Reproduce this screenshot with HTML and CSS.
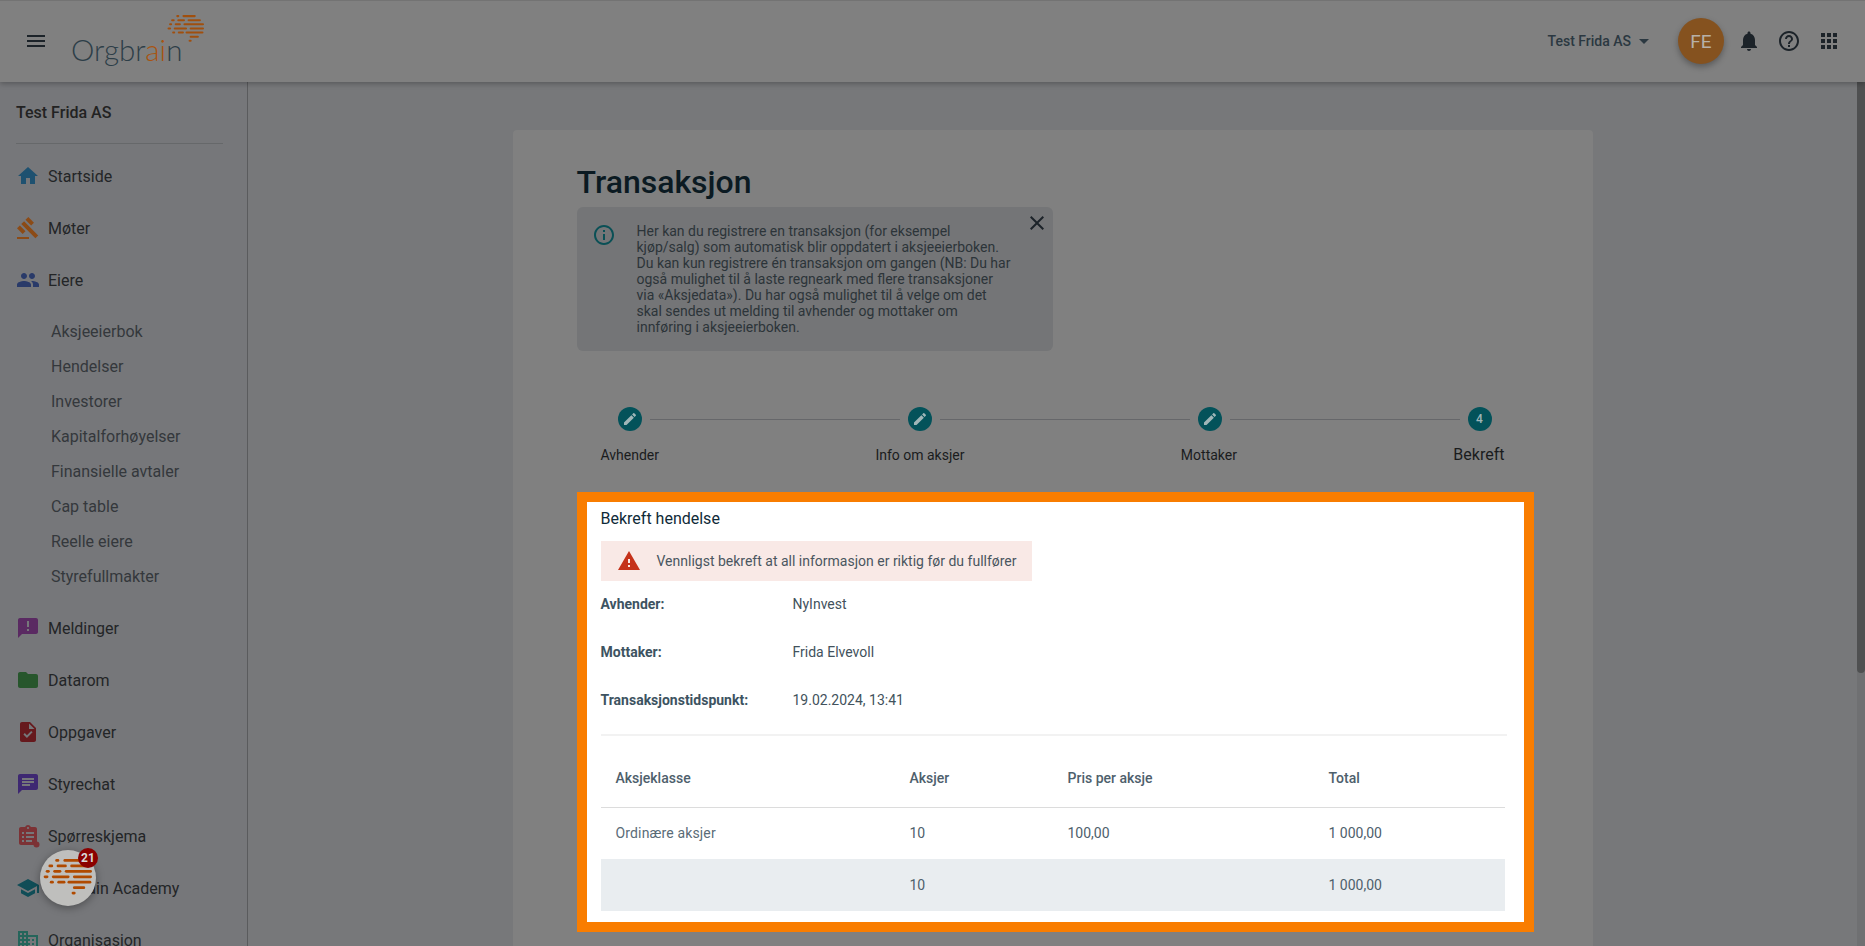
FILE: index.html
```html
<!DOCTYPE html>
<html lang="en">

<head>
    <meta charset="UTF-8">
    <meta name="viewport" content="width=device-width, initial-scale=1.0">
    <title>Orgbrain - Transaksjon</title>
    <link rel="stylesheet" href="styles.css">
</head>

<body>
    <svg class="defs" width="0" height="0">
        <symbol id="brain" viewBox="0 0 36 30">
            <rect x="9" y="0" width="3" height="2" rx="1" />
            <rect x="15" y="0" width="13" height="2" rx="1" />
            <rect x="4" y="4" width="3.500" height="2" rx="1" />
            <rect x="10" y="4" width="7.500" height="2" rx="1" />
            <rect x="20" y="4" width="13" height="2" rx="1" />
            <rect x="2" y="8" width="3" height="2" rx="1" />
            <rect x="7.500" y="8" width="6" height="2" rx="1" />
            <rect x="16" y="8" width="20" height="2" rx="1" />
            <rect x="0.500" y="12" width="3.500" height="2" rx="1" />
            <rect x="6.500" y="12" width="13" height="2" rx="1" />
            <rect x="22" y="12" width="14" height="2" rx="1" />
            <rect x="5" y="16" width="3" height="2" rx="1" />
            <rect x="10.500" y="16" width="6" height="2" rx="1" />
            <rect x="18" y="16" width="17.500" height="2" rx="1" />
            <rect x="22" y="20" width="9" height="2" rx="1" />
            <rect x="21" y="24" width="3" height="2" rx="1" />
        </symbol>
    </svg>

    <header class="topbar">
        <svg class="icon menu-icon" viewBox="0 0 24 24"><path d="M3 18h18v-2H3v2zm0-5h18v-2H3v2zm0-7v2h18V6H3z" /></svg>
        <div class="logo">
            <span class="logo-text">Orgbr<span class="logo-accent">ai</span>n</span>
            <svg class="logo-brain"><use href="#brain" /></svg>
        </div>
        <div class="topbar-right">
            <span class="org-name">Test Frida AS</span>
            <span class="caret"></span>
            <span class="avatar">FE</span>
            <svg class="icon bar-icon" viewBox="0 0 24 24"><path d="M12 22c1.100 0 2-.9 2-2h-4c0 1.100.89 2 2 2zm6-6v-5c0-3.070-1.640-5.640-4.500-6.320V4c0-.83-.67-1.500-1.500-1.500s-1.500.67-1.500 1.500v.68C7.630 5.360 6 7.920 6 11v5l-2 2v1h16v-1l-2-2z" /></svg>
            <svg class="icon bar-icon" viewBox="0 0 24 24"><path d="M11 18h2v-2h-2v2zm1-16C6.480 2 2 6.480 2 12s4.480 10 10 10 10-4.480 10-10S17.520 2 12 2zm0 18c-4.410 0-8-3.590-8-8s3.590-8 8-8 8 3.590 8 8-3.590 8-8 8zm0-14c-2.210 0-4 1.790-4 4h2c0-1.100.9-2 2-2s2 .9 2 2c0 2-3 1.750-3 5h2c0-2.250 3-2.500 3-5 0-2.210-1.790-4-4-4z" /></svg>
            <svg class="icon bar-icon" viewBox="0 0 24 24"><path d="M4 8h4V4H4v4zm6 12h4v-4h-4v4zm-6 0h4v-4H4v4zm0-6h4v-4H4v4zm6 0h4v-4h-4v4zm6-10v4h4V4h-4zm-6 4h4V4h-4v4zm6 6h4v-4h-4v4zm0 6h4v-4h-4v4z" /></svg>
        </div>
    </header>

    <div class="layout">
        <aside class="sidebar">
            <div class="sidebar-title">Test Frida AS</div>
            <nav>
                <a class="nav-item">
                    <svg class="icon home" viewBox="0 0 24 24"><path d="M10 20v-6h4v6h5v-8h3L12 3 2 12h3v8z" /></svg>
                    Startside
                </a>
                <a class="nav-item">
                    <svg class="icon gavel" viewBox="0 0 24 24"><path d="M1 21h12v2H1zM5.245 8.070l2.830-2.827 14.140 14.142-2.828 2.828zM12.317 1l5.657 5.656-2.830 2.830-5.654-5.660zM3.825 9.485l5.657 5.657-2.828 2.828-5.657-5.657z" /></svg>
                    Møter
                </a>
                <a class="nav-item">
                    <svg class="icon people" viewBox="0 0 24 24"><path d="M16 11c1.660 0 2.990-1.340 2.990-3S17.660 5 16 5c-1.660 0-3 1.340-3 3s1.340 3 3 3zm-8 0c1.660 0 2.990-1.340 2.990-3S9.660 5 8 5C6.340 5 5 6.340 5 8s1.340 3 3 3zm0 2c-2.330 0-7 1.170-7 3.500V19h14v-2.500c0-2.330-4.670-3.500-7-3.500zm8 0c-.29 0-.62.02-.97.05 1.160.84 1.970 1.970 1.970 3.450V19h6v-2.500c0-2.330-4.670-3.500-7-3.500z" /></svg>
                    Eiere
                </a>
                <div class="subnav">
                    <a>Aksjeeierbok</a>
                    <a>Hendelser</a>
                    <a>Investorer</a>
                    <a>Kapitalforhøyelser</a>
                    <a>Finansielle avtaler</a>
                    <a>Cap table</a>
                    <a>Reelle eiere</a>
                    <a>Styrefullmakter</a>
                </div>
                <a class="nav-item">
                    <svg class="icon messages" viewBox="0 0 24 24"><path d="M20 2H4c-1.100 0-1.990.9-1.990 2L2 22l4-4h14c1.100 0 2-.9 2-2V4c0-1.100-.9-2-2-2zm-7 9h-2V5h2v6zm0 4h-2v-2h2v2z" /></svg>
                    Meldinger
                </a>
                <a class="nav-item">
                    <svg class="icon folder" viewBox="0 0 24 24"><path d="M10 4H4c-1.100 0-1.990.9-1.990 2L2 18c0 1.100.9 2 2 2h16c1.100 0 2-.9 2-2V8c0-1.100-.9-2-2-2h-8l-2-2z" /></svg>
                    Datarom
                </a>
                <a class="nav-item">
                    <svg class="icon tasks" viewBox="0 0 24 24"><path d="M14 2H6c-1.100 0-1.990.9-1.990 2L4 20c0 1.100.89 2 1.990 2H18c1.100 0 2-.9 2-2V8l-6-6zm-3.060 16L7.400 14.460l1.410-1.410 2.120 2.120 4.240-4.240 1.410 1.410L10.940 18zM13 9V3.500L18.500 9H13z" /></svg>
                    Oppgaver
                </a>
                <a class="nav-item">
                    <svg class="icon chat" viewBox="0 0 24 24"><path d="M20 2H4c-1.100 0-1.990.9-1.990 2L2 22l4-4h14c1.100 0 2-.9 2-2V4c0-1.100-.9-2-2-2zM6 9h12v2H6V9zm8 5H6v-2h8v2zm4-6H6V6h12v2z" /></svg>
                    Styrechat
                </a>
                <a class="nav-item">
                    <svg class="icon survey" viewBox="0 0 24 24">
                        <path d="M19 3h-4.180C14.400 1.840 13.300 1 12 1c-1.300 0-2.400.84-2.820 2H5c-1.100 0-2 .9-2 2v14c0 1.100.9 2 2 2h14c1.100 0 2-.9 2-2V5c0-1.100-.9-2-2-2zm-7 0c.55 0 1 .45 1 1s-.45 1-1 1-1-.45-1-1 .45-1 1-1zM6 8h2v2H6V8zm0 4h2v2H6v-2zm0 4h2v2H6v-2zm4-8h8v2h-8V8zm0 4h8v2h-8v-2zm0 4h6v2h-6v-2z" fill-rule="evenodd" />
                        <circle cx="20.500" cy="20.500" r="3" />
                    </svg>
                    Spørreskjema
                </a>
                <a class="nav-item">
                    <svg class="icon academy" viewBox="0 0 24 24"><path d="M5 13.180v4L12 21l7-3.820v-4L12 17l-7-3.820zM12 3L1 9l11 6 9-4.910V17h2V9L12 3z" /></svg>
                    Orgbrain Academy
                </a>
                <a class="nav-item">
                    <svg class="icon org" viewBox="0 0 24 24"><path d="M12 7V3H2v18h20V7H12zM6 19H4v-2h2v2zm0-4H4v-2h2v2zm0-4H4V9h2v2zm0-4H4V5h2v2zm4 12H8v-2h2v2zm0-4H8v-2h2v2zm0-4H8V9h2v2zm0-4H8V5h2v2zm10 12h-8v-2h2v-2h-2v-2h2v-2h-2V9h8v10zm-2-8h-2v2h2v-2zm0 4h-2v2h2v-2z" /></svg>
                    Organisasjon
                </a>
            </nav>
        </aside>

        <main class="content">
            <section class="card">
                <h1>Transaksjon</h1>
                <div class="info-box">
                    <svg class="icon info-icon" viewBox="0 0 24 24"><path d="M11 7h2v2h-2zm0 4h2v6h-2zm1-9C6.480 2 2 6.480 2 12s4.480 10 10 10 10-4.480 10-10S17.520 2 12 2zm0 18c-4.410 0-8-3.590-8-8s3.590-8 8-8 8 3.590 8 8-3.590 8-8 8z" /></svg>
                    <p>Her kan du registrere en transaksjon (for eksempel kjøp/salg) som automatisk blir oppdatert i aksjeeierboken. Du kan kun registrere én transaksjon om gangen (NB: Du har også mulighet til å laste regneark med flere transaksjoner via «Aksjedata»). Du har også mulighet til å velge om det skal sendes ut melding til avhender og mottaker om innføring i aksjeeierboken.</p>
                    <svg class="icon close-icon" viewBox="0 0 24 24"><path d="M19 6.410L17.590 5 12 10.590 6.410 5 5 6.410 10.590 12 5 17.590 6.410 19 12 13.410 17.590 19 19 17.590 13.410 12z" /></svg>
                </div>

                <div class="stepper">
                    <div class="step-track">
                        <span class="step-dot"><svg viewBox="0 0 24 24"><path d="M3 17.250V21h3.750L17.810 9.940l-3.750-3.750L3 17.250zM20.710 7.040c.39-.39.39-1.020 0-1.410l-2.340-2.340c-.39-.39-1.020-.39-1.410 0l-1.830 1.830 3.750 3.750 1.830-1.830z" /></svg></span>
                        <span class="step-line"></span>
                        <span class="step-dot"><svg viewBox="0 0 24 24"><path d="M3 17.250V21h3.750L17.810 9.940l-3.750-3.750L3 17.250zM20.710 7.040c.39-.39.39-1.020 0-1.410l-2.340-2.340c-.39-.39-1.020-.39-1.410 0l-1.830 1.830 3.750 3.750 1.830-1.830z" /></svg></span>
                        <span class="step-line"></span>
                        <span class="step-dot"><svg viewBox="0 0 24 24"><path d="M3 17.250V21h3.750L17.810 9.940l-3.750-3.750L3 17.250zM20.710 7.040c.39-.39.39-1.020 0-1.410l-2.340-2.340c-.39-.39-1.020-.39-1.410 0l-1.830 1.830 3.750 3.750 1.830-1.830z" /></svg></span>
                        <span class="step-line step-line-last"></span>
                        <span class="step-dot">4</span>
                    </div>
                    <div class="step-labels">
                        <span>Avhender</span>
                        <span>Info om aksjer</span>
                        <span>Mottaker</span>
                        <span class="step-current">Bekreft</span>
                    </div>
                </div>

                <div class="confirm-box">
                    <h2>Bekreft hendelse</h2>
                    <div class="warning">
                        <svg class="icon warning-icon" viewBox="0 0 24 24"><path d="M1 21h22L12 2 1 21zm12-3h-2v-2h2v2zm0-4h-2v-4h2v4z" /></svg>
                        Vennligst bekreft at all informasjon er riktig før du fullfører
                    </div>
                    <dl class="summary">
                        <div><dt>Avhender:</dt><dd>NyInvest</dd></div>
                        <div><dt>Mottaker:</dt><dd>Frida Elvevoll</dd></div>
                        <div><dt>Transaksjonstidspunkt:</dt><dd>19.02.2024, 13:41</dd></div>
                    </dl>
                    <hr class="divider">
                    <table>
                        <thead>
                            <tr>
                                <th class="col-class">Aksjeklasse</th>
                                <th class="col-shares">Aksjer</th>
                                <th class="col-price">Pris per aksje</th>
                                <th>Total</th>
                            </tr>
                        </thead>
                        <tbody>
                            <tr>
                                <td class="class-name">Ordinære aksjer</td>
                                <td>10</td>
                                <td>100,00</td>
                                <td>1 000,00</td>
                            </tr>
                            <tr class="sum-row">
                                <td></td>
                                <td>10</td>
                                <td></td>
                                <td>1 000,00</td>
                            </tr>
                        </tbody>
                    </table>
                </div>
            </section>
        </main>

        <div class="scrollbar"><div class="scrollbar-thumb"></div></div>
    </div>

    <button class="help-fab">
        <svg class="fab-brain"><use href="#brain" /></svg>
        <span class="fab-badge">21</span>
    </button>
</body>

</html>
```

FILE: styles.css
```css
* {
    box-sizing: border-box;
}

body {
    margin: 0;
    height: 100vh;
    overflow: hidden;
    display: flex;
    flex-direction: column;
    font-family: Roboto, "Liberation Sans", sans-serif;
    font-size: 14px;
    background: #77787a;
    color: #232527;
}

.defs {
    position: absolute;
}

.icon {
    width: 24px;
    height: 24px;
    flex: none;
    fill: currentColor;
}

/* top bar */
.topbar {
    height: 82px;
    flex: none;
    display: flex;
    align-items: center;
    padding: 0 24px;
    background: #808080;
    box-shadow: 0 2px 5px rgba(0, 0, 0, 0.25), inset 0 1px 0 #737373;
    position: relative;
    z-index: 2;
}

.menu-icon {
    color: #1c2329;
}

.logo {
    margin-left: 24px;
    position: relative;
    width: 135px;
    height: 60px;
}

.logo-text {
    position: absolute;
    left: -1px;
    top: 19px;
    font-family: Lato, sans-serif;
    font-weight: 300;
    font-size: 29.500px;
    line-height: 40px;
    color: #2d3e48;
}

.logo-accent {
    color: #a85410;
}

.logo-brain {
    position: absolute;
    left: 95px;
    top: 4px;
    width: 37px;
    height: 31px;
    fill: #a04f0e;
}

.topbar-right {
    margin-left: auto;
    display: flex;
    align-items: center;
    color: #1c2329;
}

.org-name {
    font-weight: 500;
    color: #2b3841;
}

.caret {
    margin-left: 8px;
    border-left: 5px solid transparent;
    border-right: 5px solid transparent;
    border-top: 5px solid #2b3841;
}

.avatar {
    width: 46px;
    height: 46px;
    margin: 0 -3px 0 29px;
    border-radius: 50%;
    background: #85521f;
    color: #b7b0a8;
    font-size: 19px;
    display: flex;
    align-items: center;
    justify-content: center;
    box-shadow: 0 3px 6px rgba(0, 0, 0, 0.3);
}

.bar-icon {
    margin-left: 16px;
}

/* sidebar */
.layout {
    flex: 1;
    display: flex;
    min-height: 0;
}

.sidebar {
    width: 248px;
    flex: none;
    border-right: 1px solid #5a5b5d;
    background: #76777a;
    overflow: hidden;
}

.sidebar-title {
    margin: 21px 24px 6px 16px;
    padding-bottom: 20px;
    font-size: 16px;
    line-height: 20px;
    font-weight: 500;
    color: #222;
    border-bottom: 1px solid #66686a;
}

.nav-item {
    height: 52px;
    display: flex;
    align-items: center;
    gap: 8px;
    padding-left: 16px;
    font-size: 16px;
}

.home { color: #1e5170; }
.gavel { color: #8c4b16; }
.people { color: #293a69; }
.messages { color: #5a2a62; }
.folder { color: #27562c; }
.tasks { color: #66191d; }
.chat { color: #3e2872; }
.survey { color: #7c3235; }
.academy { color: #104d57; }
.org { color: #25655b; }

.subnav {
    margin: 8px 0;
}

.subnav a {
    display: block;
    height: 35px;
    line-height: 35px;
    padding-left: 51px;
    font-size: 16px;
    color: #34383c;
}

/* main column */
.content {
    flex: 1;
    min-width: 0;
    overflow: hidden;
}

.card {
    width: 1080px;
    margin: 48px auto 0;
    min-height: 900px;
    padding: 32px 64px;
    background: #808080;
    border-radius: 4px;
}

h1 {
    margin: 0 0 5px;
    font-size: 32px;
    line-height: 40px;
    font-weight: 500;
    color: #0b1a22;
}

.info-box {
    width: 476px;
    height: 144px;
    padding: 16px 15px;
    display: flex;
    background: #747577;
    border-radius: 6px;
    position: relative;
    color: #2c3439;
    line-height: 16px;
}

.info-box p {
    margin: 0 0 0 21px;
    width: 376px;
}

.info-icon {
    color: #0a5056;
}

.close-icon {
    position: absolute;
    top: 4px;
    right: 4px;
    color: #1c2329;
}

/* stepper */
.stepper {
    margin: 56px 24px 27px;
}

.step-track {
    display: flex;
    align-items: center;
    padding-left: 17px;
}

.step-dot {
    width: 24px;
    height: 24px;
    flex: none;
    border-radius: 50%;
    background: #03525a;
    color: #9fb6b8;
    font-size: 12px;
    font-weight: 500;
    display: flex;
    align-items: center;
    justify-content: center;
}

.step-dot svg {
    width: 16px;
    height: 16px;
    fill: #9fb6b8;
}

.step-line {
    width: 250px;
    height: 1px;
    margin: 0 8px;
    background: #66676a;
}

.step-line-last {
    width: 230px;
}

.step-labels {
    margin-top: 14px;
    display: flex;
    justify-content: space-between;
    align-items: center;
    line-height: 20px;
    color: #1a1c1d;
}

.step-current {
    font-size: 16px;
}

/* highlighted confirmation block */
.confirm-box {
    width: 957px;
    padding: 7px 19px 11px 14px;
    background: #fff;
    border: 10px solid #f97d00;
}

h2 {
    margin: 0 0 12px;
    font-size: 16px;
    line-height: 20px;
    font-weight: 400;
    color: #0f2a38;
}

.warning {
    width: 431px;
    height: 40px;
    padding-left: 16px;
    display: flex;
    align-items: center;
    gap: 16px;
    background: #f9e9e6;
    color: #4a5660;
}

.warning-icon {
    color: #c5321a;
}

.summary {
    margin: 13px 0 0;
}

.summary div {
    display: flex;
    height: 48px;
    line-height: 20px;
}

.summary dt {
    width: 192px;
    font-weight: 700;
    color: #3d5361;
}

.summary dd {
    margin: 0;
    color: #42525c;
}

.divider {
    margin: -4px -2px 0 0;
    height: 2px;
    border: 0;
    background: #f2f2f2;
}

table {
    width: 100%;
    table-layout: fixed;
    border-collapse: collapse;
}

th,
td {
    padding: 0 15px;
    text-align: left;
    color: #4e606c;
}

th {
    height: 71px;
    padding-top: 14px;
    font-weight: 500;
    border-bottom: 1px solid #dcdcdc;
}

td {
    height: 52px;
}

.class-name {
    letter-spacing: 0.15px;
    color: #5a6c78;
}

.col-class {
    width: 294px;
}

.col-shares {
    width: 158px;
}

.col-price {
    width: 261px;
}

.sum-row td {
    background: #e9edf0;
}

/* fake page scrollbar */
.scrollbar {
    width: 8px;
    flex: none;
    background: #6f7072;
}

.scrollbar-thumb {
    height: 591px;
    background: #4f5051;
    border-radius: 0 0 4px 4px;
}

/* floating help button */
.help-fab {
    position: absolute;
    left: 40px;
    top: 850px;
    width: 56px;
    height: 56px;
    padding: 0;
    border: 0;
    border-radius: 50%;
    background: #bfbfbd;
    box-shadow: 0 2px 8px rgba(0, 0, 0, 0.35);
    z-index: 3;
}

.fab-brain {
    position: absolute;
    left: 3px;
    top: 9px;
    width: 49px;
    height: 41px;
    fill: #b04a00;
}

.fab-badge {
    position: absolute;
    left: 38px;
    top: -2px;
    width: 20px;
    height: 20px;
    border-radius: 50%;
    background: #8b0000;
    color: #d8d8d8;
    font-family: Roboto, sans-serif;
    font-size: 12px;
    font-weight: 700;
    line-height: 20px;
    text-align: center;
}
```
